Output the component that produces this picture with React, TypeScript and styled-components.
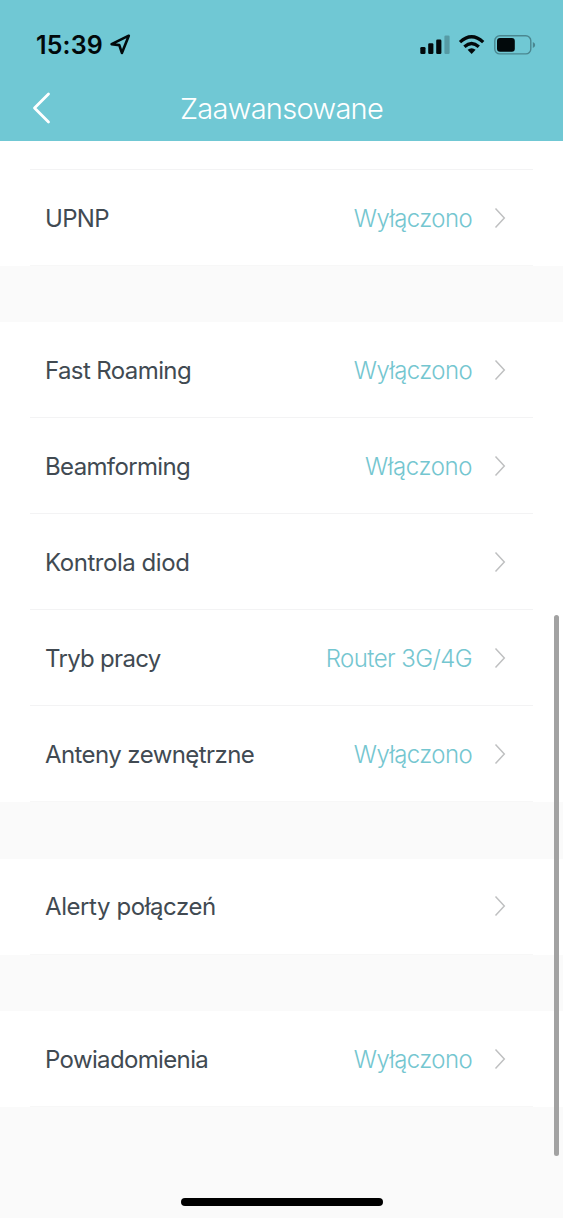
import React from "react";
import styled, { createGlobalStyle } from "styled-components";

const GlobalStyle = createGlobalStyle`
  * { box-sizing: border-box; }
  body { margin: 0; background: #fafafa; font-family: Inter, "Liberation Sans", sans-serif; }
`;

const Screen = styled.div`
  position: relative;
  width: 563px;
  height: 1218px;
  overflow: hidden;
  background: #fafafa;
  display: flex;
  flex-direction: column;
`;

const Header = styled.header`
  height: 141px;
  flex: none;
  background: #70c8d4;
`;

const StatusBar = styled.div`
  height: 75px;
  padding: 14px 27px 0 36px;
  display: flex;
  align-items: center;
  justify-content: space-between;
`;

const Clock = styled.div`
  display: flex;
  align-items: center;
  gap: 6px;
  color: #02090b;
  font-size: 25px;
  font-weight: 600;
  letter-spacing: 0.15px;
  line-height: 30px;
`;

const NavBar = styled.div`
  height: 66px;
  padding: 0 32px;
  display: grid;
  grid-template-columns: 20px 1fr 20px;
  align-items: center;
`;

const Title = styled.h1`
  margin: 0;
  padding-top: 2px;
  text-align: center;
  color: #fff;
  font-size: 29px;
  font-weight: 300;
  line-height: 36px;
  letter-spacing: -0.7px;
`;

const Group = styled.section<{ $gap: number }>`
  flex: none;
  background: #fff;
  margin-bottom: ${(p) => p.$gap}px;
`;

const Filler = styled.div`
  height: 29px;
  margin: 0 30px;
  border-bottom: 1px solid #f3f3f4;
`;

const Row = styled.div`
  height: 96px;
  margin: 0 30px;
  padding: 0 27px 0 15px;
  border-bottom: 1px solid #f3f3f4;
  display: flex;
  align-items: center;

  &:last-child {
    border-bottom-color: #f7f7f7;
  }
`;

const Label = styled.span<{ $track: number }>`
  flex: 1;
  padding-top: 2px;
  color: #414a52;
  font-size: 24px;
  line-height: 30px;
  white-space: nowrap;
  letter-spacing: ${(p) => p.$track}px;
`;

const Value = styled.span<{ $track: number }>`
  padding-top: 2px;
  color: #74c6d0;
  font-size: 24px;
  font-weight: 300;
  line-height: 30px;
  white-space: nowrap;
  margin-right: 22px;
  letter-spacing: ${(p) => p.$track}px;
`;

const ScrollThumb = styled.div`
  position: absolute;
  left: 554px;
  top: 615px;
  width: 5px;
  height: 541px;
  border-radius: 3px;
  background: #a2a2a2;
`;

const HomeIndicator = styled.div`
  position: absolute;
  left: 181px;
  top: 1198px;
  width: 202px;
  height: 8px;
  border-radius: 4px;
  background: #000;
`;

const Chevron = () => (
  <svg width="12" height="22" viewBox="0 0 12 22" fill="none" stroke="#bfc0c1" strokeWidth="1.5">
    <path d="M1.5 1.5 10.3 11 1.5 20.5" />
  </svg>
);

const BackIcon = () => (
  <svg width="20" height="32" viewBox="0 0 20 32" fill="none" stroke="#fff" strokeWidth="2.8" strokeLinecap="round" strokeLinejoin="round">
    <path d="M16.5 2 2.5 16 16.5 30" />
  </svg>
);

const LocationIcon = () => (
  <svg width="22" height="21" viewBox="0 0 22 21" fill="none" stroke="#02090b" strokeWidth="2.6" strokeLinejoin="round">
    <path d="M19.8 1.7 2.6 10.2 10.3 11.1 12.9 18.9Z" />
  </svg>
);

const StatusIcons = () => (
  <svg width="116" height="22" viewBox="0 0 116 22" fill="#02090b">
    <rect x="0.3" y="13" width="5.2" height="7" rx="1.3" />
    <rect x="8.2" y="9.3" width="5.2" height="10.7" rx="1.3" />
    <rect x="16.2" y="5.5" width="5.2" height="14.5" rx="1.3" />
    <rect x="24.4" y="1.4" width="5.2" height="18.6" rx="1.3" fill="#569ba5" />
    <g fill="none" stroke="#02090b" strokeWidth="3.3">
      <path d="M40 8.1Q51.6 -2.6 63.2 8.1" />
      <path d="M44.4 12.7Q51.6 6.3 58.8 12.7" />
    </g>
    <path d="M47.6 15.8Q51.6 12.6 55.6 15.8L51.6 20Z" />
    <rect x="74.8" y="1.7" width="36" height="18.2" rx="5" fill="none" stroke="#4a8790" strokeWidth="1.4" />
    <rect x="77" y="3.9" width="17.8" height="13.8" rx="3" />
    <path d="M112.8 7.9Q115.2 8.7 115.2 10.9T112.8 13.9Z" fill="#4a8790" />
  </svg>
);

type Item = { label: string; track: number; value?: string; valueTrack?: number };

const groups: { gap: number; items: Item[] }[] = [
  { gap: 56, items: [{ label: "UPNP", track: -0.7, value: "Wyłączono", valueTrack: -0.62 }] },
  {
    gap: 56.5,
    items: [
      { label: "Fast Roaming", track: -0.6, value: "Wyłączono", valueTrack: -0.62 },
      { label: "Beamforming", track: -0.64, value: "Włączono", valueTrack: -0.42 },
      { label: "Kontrola diod", track: -0.45 },
      { label: "Tryb pracy", track: -0.7, value: "Router 3G/4G", valueTrack: -0.58 },
      { label: "Anteny zewnętrzne", track: -0.58, value: "Wyłączono", valueTrack: -0.62 },
    ],
  },
  { gap: 56.5, items: [{ label: "Alerty połączeń", track: -0.42 }] },
  { gap: 0, items: [{ label: "Powiadomienia", track: -0.64, value: "Wyłączono", valueTrack: -0.62 }] },
];

export default function App() {
  return (
    <Screen>
      <GlobalStyle />
      <Header>
        <StatusBar>
          <Clock>
            <span>15:39</span>
            <LocationIcon />
          </Clock>
          <StatusIcons />
        </StatusBar>
        <NavBar>
          <BackIcon />
          <Title>Zaawansowane</Title>
        </NavBar>
      </Header>
      {groups.map((group, i) => (
        <Group key={i} $gap={group.gap}>
          {i === 0 && <Filler />}
          {group.items.map((item) => (
            <Row key={item.label}>
              <Label $track={item.track}>{item.label}</Label>
              {item.value && <Value $track={item.valueTrack ?? 0}>{item.value}</Value>}
              <Chevron />
            </Row>
          ))}
        </Group>
      ))}
      <ScrollThumb />
      <HomeIndicator />
    </Screen>
  );
}
